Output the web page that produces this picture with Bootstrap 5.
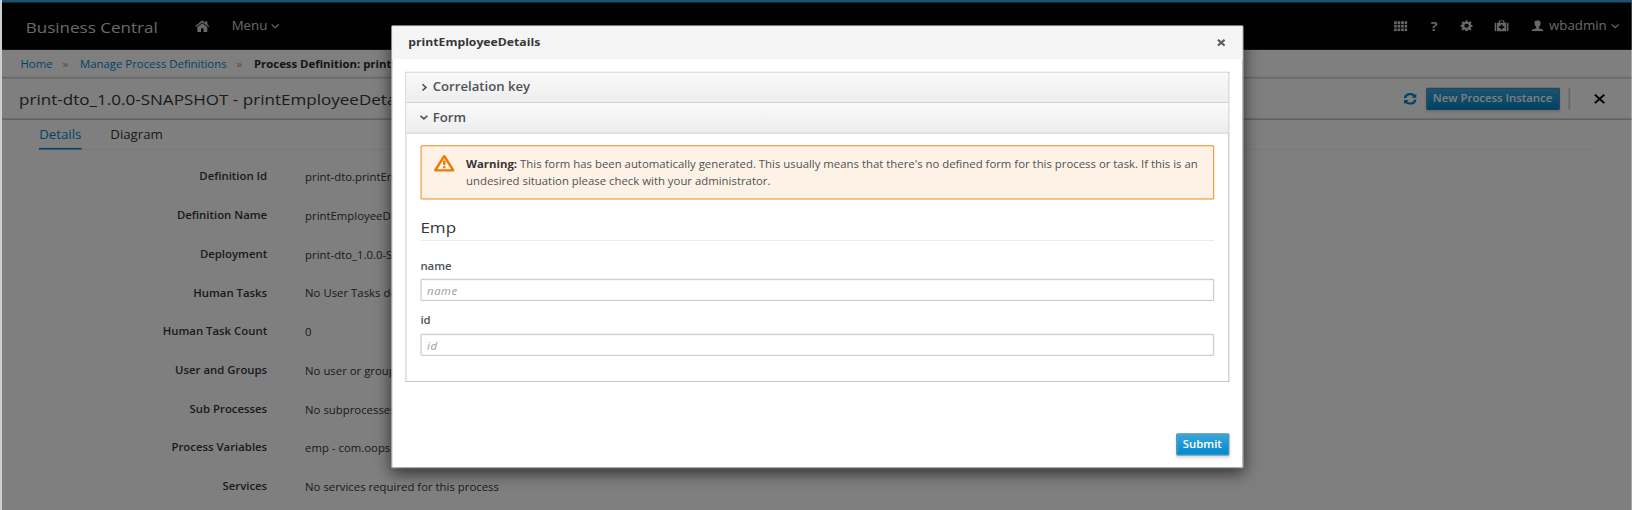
<!DOCTYPE html>
<html lang="en">
<head>
<meta charset="utf-8">
<title>Business Central</title>
<link href="https://cdn.jsdelivr.net/npm/bootstrap@5.3.0/dist/css/bootstrap.min.css" rel="stylesheet">
<style>
html,body{height:100%;overflow:hidden}
body{font-family:"Open Sans",sans-serif;font-size:12px;line-height:20px;color:#363636;background:#cfcfcf}
.viewport{width:100%;height:100vh;overflow:hidden;padding-left:2px}
/* anamorphic zoom of the whole console */
.console{width:1721px;height:603.5px;transform:scale(.947,.845);transform-origin:0 0;position:relative;background:#fff;overflow:hidden}
.masthead{height:59.2px;box-shadow:inset 0 3px #39a5dc;background:#030303;color:#d1d1d1;padding:2.4px 13.5px 0 25px}
.brandname{font-size:18px;width:158px;margin-right:21px;padding-top:3px}
.masthead .util{font-size:14px}
.crumbs{height:34px;border-bottom:2px solid #d1d1d1;padding:4px 0 0 19.5px;color:#9c9c9c}
.crumbs a,.tabset .on{color:#0088ce;text-decoration:none}
.crumbs b{font-weight:700;color:#292929}
.crumbs span{margin:0 12.5px 0 10.5px}
.titlebar{height:48.6px;border-bottom:2px solid #c4c4c4;padding:2px 0 0 18px}
.titlebar h1{font-size:18px;margin:0;line-height:22px}
.btn-pf{font-size:12px;font-weight:600;line-height:20px;height:26px;padding:2px 6px;border:1px solid #00659c;border-radius:1px;color:#fff;background:linear-gradient(#39a5dc,#0088ce);box-shadow:0 2px 3px rgba(3,3,3,.15)}
.tabset{margin:0 40px 0 39.3px;height:35px;border-bottom:1px solid #ededed;gap:30.500px;font-size:14px}
.tabset div{height:35px;padding-top:7px}
.tabset .on{border-bottom:2px solid #0088ce}
.facts{padding-top:9.5px}
.facts .fact{height:45.9px}
.fact dt{width:280px;text-align:right;font-weight:600;margin:0}
.fact dd{margin:2px 0 0 40px}
.modal-backdrop,.modal{width:100%;height:100%}
.modal-dialog{max-width:900px;width:900px;margin:29.6px 0 0 411px}
.modal-content{border:1px solid #bbb;border-radius:1px;height:524px;box-shadow:0 5px 18px rgba(0,0,0,.62);color:#4d5258}
.modal-header{height:39.5px;background:#f5f5f5;border:0;border-radius:0;padding:0 18px 0 17px}
.modal-title{font-size:12.9px;font-weight:700;color:#363636}
.modal-body{padding:14.7px 14.5px 0 13.8px}
.pgroup{border:1px solid #bbb;height:367px;border-left-color:#c8c8c8}
.phead{height:36px;background:linear-gradient(#fafafa,#ededed);border-bottom:1px solid #c4c4c4;font-size:13.9px;font-weight:600;padding:0 14px}
.phead svg{margin-right:6px;margin-left:2px}
.warnbox{margin:14.3px 15px 0;border:1px solid #ec7a08;background:#fdf2e5;height:64px;border-radius:1px;padding:11.5px 14px 0 13px;color:#4d5258}
.warnbox b{color:#363636}
.warnbox svg{margin:-1.5px 12.2px 0 0;flex:none}
fieldset{margin:0 15px}
legend{font-size:18px;height:49px;border-bottom:1px solid #e6e6e6;margin:0;padding-top:22px;line-height:22px;color:#363636;float:none}
.field{height:65px}
.field label{font-weight:600;height:25px;display:block}
.field .form-control{height:26px;border:1px solid #bbb;border-radius:1px;font-size:12px;line-height:20px;padding:3px 6px 1px;box-shadow:inset 0 1px 1px rgba(3,3,3,.075);display:block}
.form-control::placeholder{font-style:italic;letter-spacing:.6px;color:#9c9c9c;opacity:1}
.first-field{margin-top:20px}
</style>
</head>
<body>
<div class="viewport">
<div class="console">
  <header class="masthead d-flex align-items-center">
    <div class="brandname text-nowrap">Business Central</div>
    <svg width="15" height="14" viewBox="0 0 15 14" fill="currentColor"><path d="M7.5 0 0 7l1 1.1L7.5 2.2 14 8.100 15 7 12.8 4.9V1h-2v2.1z"/><path d="M7.5 3.4 2.2 8.2V13q0 1 1 1h3V9.5h2.6V14h3q1 0 1-1V8.2z"/></svg>
    <div class="util" style="margin-left:23.5px">Menu</div>
    <svg class="ms-1" width="9" height="6" viewBox="0 0 9 6" fill="none" stroke="currentColor" stroke-width="1.3"><path d="M.7.8 4.5 4.8 8.3.8"/></svg>
    <div class="util d-flex align-items-center ms-auto">
      <svg width="14" height="12" viewBox="0 0 15 11" preserveAspectRatio="none" fill="currentColor"><path d="M0 0h3v3H0zM4 0h3v3H4zM8 0h3v3H8zM12 0h3v3h-3zM0 4h3v3H0zM4 4h3v3H4zM8 4h3v3H8zM12 4h3v3h-3zM0 8h3v3H0zM4 8h3v3H4zM8 8h3v3H8zM12 8h3v3h-3z"/></svg>
      <span class="fw-bold" style="margin-left:24.5px;font-size:15px;width:9px">?</span>
      <svg style="margin-left:22px" width="13" height="13" viewBox="0 0 16 16" fill="currentColor" fill-rule="evenodd"><path d="M6.7 0h2.6l.4 2.2 1.3.6 1.9-1.3 1.8 1.8L13.3 5.2l.5 1.3 2.2.4v2.5l-2.2.4-.5 1.3 1.3 1.9-1.8 1.8-1.8-1.3-1.3.5-.4 2.2H6.7l-.4-2.2-1.300-.5-1.9 1.3-1.8-1.8 1.3-1.9-.5-1.3L0 9.4V6.9l2.100-.4.6-1.3-1.400-1.900 1.8-1.8L5 2.8l1.3-.6zM8 5.2a2.9 2.9 0 100 5.8 2.9 2.9 0 000-5.8z"/></svg>
      <svg style="margin-left:23px" width="15" height="14" viewBox="0 0 15 14" fill="currentColor" fill-rule="evenodd"><path d="M0 4q0-1 1-1h.7v10H1q-1 0-1-1zM15 4q0-1-1-1h-.7v10h.7q1 0 1-1zM2.5 3h2V1.2Q4.5 0 5.7 0h3.600q1.200 0 1.200 1.200V3h2v10h-10zM5.700 3h3.600V1.200H5.700zM6.600 5v2h-2v2h2v2h1.800V9h2V7h-2V5z"/></svg>
      <svg style="margin-left:24px" width="13" height="13" viewBox="0 0 13 13" fill="currentColor"><path d="M6.5 0C3.7 0 3 2 3.4 4.5c.2 1.7.8 2.7 1.7 3.5v1.3C3.5 10.2 0 10.4 0 13h13c0-2.6-3.5-2.8-5.1-3.7V8c.9-.8 1.5-1.8 1.7-3.5C10 2 9.300 0 6.5 0z"/></svg>
      <span style="margin-left:6px">wbadmin</span>
      <svg class="ms-1" width="9" height="6" viewBox="0 0 9 6" fill="none" stroke="currentColor" stroke-width="1.3"><path d="M.7.8 4.5 4.8 8.3.8"/></svg>
    </div>
  </header>

  <nav class="crumbs d-flex align-items-center">
    <a href="#">Home</a><span>»</span><a href="#">Manage Process Definitions</a><span>»</span><b class="text-nowrap">Process Definition: printE</b>
  </nav>

  <section class="titlebar d-flex align-items-center">
    <h1>print-dto_1.0.0-SNAPSHOT - printEmployeeDetai</h1>
    <svg class="ms-auto" width="14" height="14" viewBox="0 0 14 14" fill="none" stroke="#0088ce" stroke-width="2.6"><path d="M1.5 6A5.5 5.5 0 0 1 11.500 3.700M12.500 8A5.500 5.500 0 0 1 2.500 10.300"/><path d="M13.500.8v5H8.500zM.5 13.200v-5h5z" fill="#0088ce" stroke="none"/></svg>
    <button class="btn btn-pf" style="margin-left:10px;width:141px">New Process Instance</button>
    <div style="width:2px;height:26px;background:#d1d1d1;margin:0 25px 0 9px"></div>
    <svg style="margin-right:28.5px" width="12" height="12" viewBox="0 0 12 12" stroke="#030303" stroke-width="2.3"><path d="M1 1 11 11M11 1 1 11"/></svg>
  </section>

  <div class="tabset d-flex"><div class="on">Details</div><div>Diagram</div></div>

  <dl class="facts m-0">
    <div class="fact d-flex align-items-center"><dt>Definition Id</dt><dd>print-dto.printEm</dd></div>
    <div class="fact d-flex align-items-center"><dt>Definition Name</dt><dd>printEmployeeD</dd></div>
    <div class="fact d-flex align-items-center"><dt>Deployment</dt><dd>print-dto_1.0.0-S</dd></div>
    <div class="fact d-flex align-items-center"><dt>Human Tasks</dt><dd>No User Tasks de</dd></div>
    <div class="fact d-flex align-items-center"><dt>Human Task Count</dt><dd>0</dd></div>
    <div class="fact d-flex align-items-center"><dt>User and Groups</dt><dd>No user or group</dd></div>
    <div class="fact d-flex align-items-center"><dt>Sub Processes</dt><dd>No subprocesses</dd></div>
    <div class="fact d-flex align-items-center"><dt>Process Variables</dt><dd>emp - com.oops</dd></div>
    <div class="fact d-flex align-items-center"><dt>Services</dt><dd>No services required for this process</dd></div>
  </dl>

  <div class="modal-backdrop show"></div>
  <div class="modal show d-block overflow-hidden">
    <div class="modal-dialog">
      <div class="modal-content">
        <div class="modal-header d-flex align-items-center justify-content-between">
          <div class="modal-title">printEmployeeDetails</div>
          <svg width="9" height="9" viewBox="0 0 9 9" stroke="#5c5c5c" stroke-width="2.4"><path d="M1 1 8 8M8 1 1 8"/></svg>
        </div>
        <div class="modal-body">
          <div class="pgroup">
            <div class="phead d-flex align-items-center"><svg width="6" height="9" viewBox="0 0 6 9" fill="none" stroke="#4d5258" stroke-width="1.8"><path d="M1 .8 4.7 4.5 1 8.2"/></svg>Correlation key</div>
            <div class="phead d-flex align-items-center"><svg style="margin-left:0;margin-right:5px" width="9" height="6" viewBox="0 0 9 6" fill="none" stroke="#4d5258" stroke-width="1.8"><path d="M.8 1 4.5 4.7 8.2 1"/></svg>Form</div>
            <div class="warnbox d-flex align-items-start">
              <svg width="22" height="21" viewBox="0 0 22 21"><path d="M11 1.8 20.5 18.5H1.5z" fill="none" stroke="#ec7a08" stroke-width="2.7" stroke-linejoin="round"/><path d="M9.5 7h3l-.4 5.5H9.9zM9.700 13.7h2.6V16H9.7z" fill="#ec7a08"/></svg>
              <div><b>Warning:</b> This form has been automatically generated. This usually means that there's no defined form for this process or task. If this is an undesired situation please check with your administrator.</div>
            </div>
            <fieldset>
              <legend>Emp</legend>
              <div class="field first-field"><label for="f-name">name</label><input id="f-name" class="form-control" placeholder="name"></div>
              <div class="field"><label for="f-id">id</label><input id="f-id" class="form-control" placeholder="id"></div>
            </fieldset>
          </div>
          <div class="d-flex justify-content-end" style="margin-top:61.3px"><button class="btn btn-pf" style="width:56px">Submit</button></div>
        </div>
      </div>
    </div>
  </div>
</div>
</div>
<script src="https://cdn.jsdelivr.net/npm/bootstrap@5.3.0/dist/js/bootstrap.bundle.min.js"></script>
</body>
</html>
